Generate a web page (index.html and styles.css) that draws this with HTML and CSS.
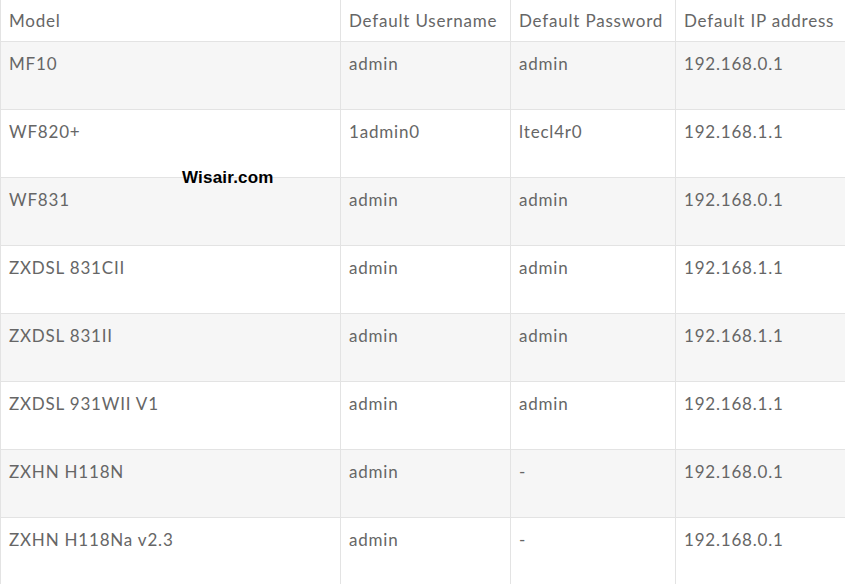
FILE: index.html
```html
<!DOCTYPE html>
<html>
<head>
<meta charset="utf-8">
<link rel="stylesheet" href="styles.css">
</head>
<body>
<div class="wrap">
<table class="creds">
  <colgroup>
    <col class="c1"><col class="c2"><col class="c3"><col class="c4">
  </colgroup>
  <thead>
    <tr><th>Model</th><th>Default Username</th><th>Default Password</th><th>Default IP address</th></tr>
  </thead>
  <tbody>
    <tr><td>MF10</td><td>admin</td><td>admin</td><td>192.168.0.1</td></tr>
    <tr><td>WF820+</td><td>1admin0</td><td>ltecl4r0</td><td>192.168.1.1</td></tr>
    <tr><td>WF831</td><td>admin</td><td>admin</td><td>192.168.0.1</td></tr>
    <tr><td>ZXDSL 831CII</td><td>admin</td><td>admin</td><td>192.168.1.1</td></tr>
    <tr><td>ZXDSL 831II</td><td>admin</td><td>admin</td><td>192.168.1.1</td></tr>
    <tr><td>ZXDSL 931WII V1</td><td>admin</td><td>admin</td><td>192.168.1.1</td></tr>
    <tr><td>ZXHN H118N</td><td>admin</td><td>-</td><td>192.168.0.1</td></tr>
    <tr><td>ZXHN H118Na v2.3</td><td>admin</td><td>-</td><td>192.168.0.1</td></tr>
  </tbody>
</table>
<div class="mark">Wisair.com</div>
</div>
</body>
</html>
```
FILE: styles.css
```css
html, body {
  margin: 0;
  padding: 0;
  background: #ffffff;
}
.wrap {
  position: relative;
  width: 846px;
}
.creds {
  border-collapse: collapse;
  table-layout: fixed;
  width: 846px;
  font-family: Lato, "Open Sans", sans-serif;
  font-size: 17px;
  color: #666666;
  letter-spacing: 0.8px;
}
.c1 { width: 340px; }
.c2 { width: 170px; }
.c3 { width: 165px; }
.c4 { width: 171px; }
.creds th, .creds td {
  border: 1px solid #e3e3e3;
  text-align: left;
  vertical-align: top;
  font-weight: 400;
  line-height: 24px;
}
.creds th {
  border-top: none;
  padding: 9px 8px 8px;
  height: 24px;
}
.creds td {
  padding: 10px 8px 0;
  height: 57px;
}
.creds tbody tr:nth-child(odd) {
  background: #f6f6f6;
}
.mark {
  position: absolute;
  left: 182px;
  top: 168px;
  font-family: "Liberation Sans", Arial, sans-serif;
  font-weight: 700;
  font-size: 17px;
  letter-spacing: 0.2px;
  color: #000;
}
```
